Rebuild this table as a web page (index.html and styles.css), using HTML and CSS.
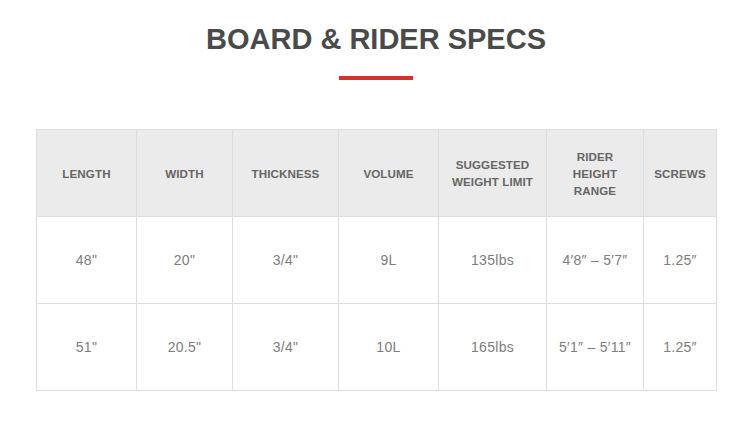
FILE: index.html
```html
<!DOCTYPE html>
<html>
<head>
<meta charset="utf-8">
<link rel="stylesheet" href="styles.css">
</head>
<body>
<section class="specs">
  <h1 class="title">BOARD &amp; RIDER SPECS</h1>
  <div class="rule"></div>
  <table class="spec-table">
    <colgroup>
      <col class="c1"><col class="c2"><col class="c3"><col class="c4"><col class="c5"><col class="c6"><col class="c7">
    </colgroup>
    <thead>
      <tr>
        <th>LENGTH</th>
        <th>WIDTH</th>
        <th>THICKNESS</th>
        <th>VOLUME</th>
        <th>SUGGESTED WEIGHT LIMIT</th>
        <th>RIDER<br>HEIGHT<br>RANGE</th>
        <th>SCREWS</th>
      </tr>
    </thead>
    <tbody>
      <tr>
        <td>48"</td><td>20"</td><td>3/4"</td><td>9L</td><td>135lbs</td><td>4′8″ – 5′7″</td><td>1.25″</td>
      </tr>
      <tr>
        <td>51"</td><td>20.5"</td><td>3/4"</td><td>10L</td><td>165lbs</td><td>5′1″ – 5′11″</td><td>1.25″</td>
      </tr>
    </tbody>
  </table>
</section>
</body>
</html>
```

FILE: styles.css
```css
html, body {
  margin: 0;
  padding: 0;
  background: #ffffff;
}
body {
  font-family: "Liberation Sans", Arial, sans-serif;
}
.specs {
  padding: 23px 0 0 36px;
  width: 680px;
}
.title {
  margin: 0;
  text-align: center;
  font-size: 29px;
  line-height: 32px;
  font-weight: bold;
  color: #4a4a4a;
}
.rule {
  width: 74px;
  height: 4px;
  background: #d1322a;
  margin: 21px auto 0;
}
.spec-table {
  margin-top: 49px;
  width: 680px;
  border-collapse: collapse;
  table-layout: fixed;
}
.c1 { width: 100px; }
.c2 { width: 96px; }
.c3 { width: 106px; }
.c4 { width: 100px; }
.c5 { width: 108px; }
.c6 { width: 97px; }
.c7 { width: 73px; }
.spec-table th,
.spec-table td {
  border: 1px solid #dedede;
  text-align: center;
  vertical-align: middle;
  padding: 0 10px;
}
.spec-table th {
  background: #ebebeb;
  height: 86px;
  font-size: 11.6px;
  line-height: 17px;
  font-weight: bold;
  color: #666666;
  letter-spacing: 0.1px;
}
.spec-table td {
  height: 86px;
  font-size: 14px;
  letter-spacing: 0.3px;
  color: #7d7d7d;
}
```
